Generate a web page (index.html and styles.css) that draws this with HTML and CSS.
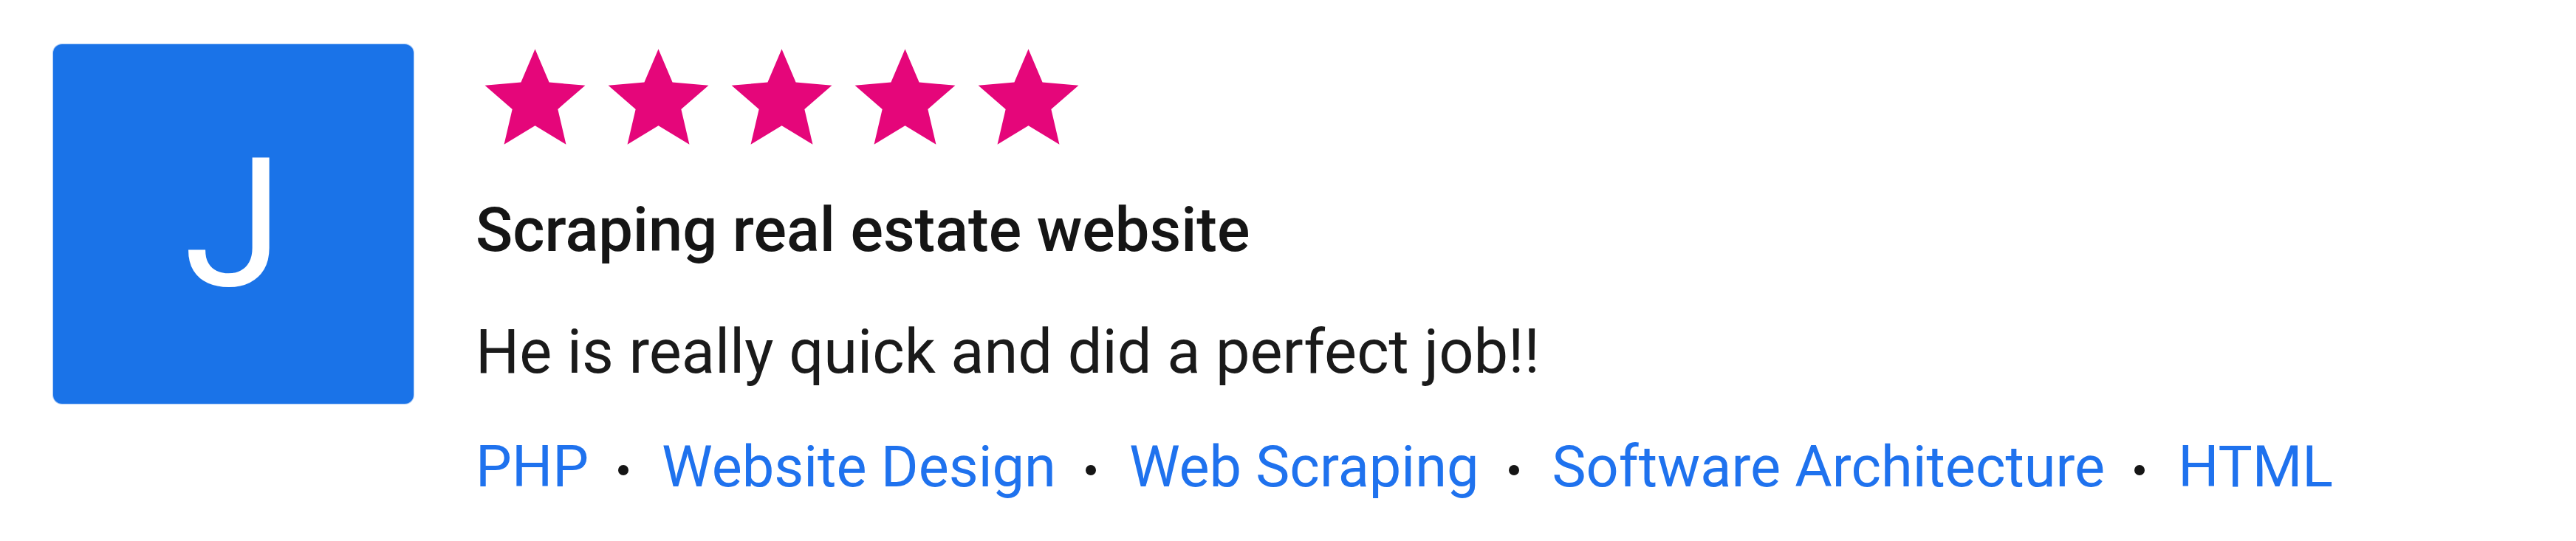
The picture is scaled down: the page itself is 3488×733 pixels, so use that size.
FILE: index.html
```html
<!DOCTYPE html>
<html lang="en">
<head>
    <meta charset="UTF-8">
    <meta name="viewport" content="width=device-width, initial-scale=1.0">
    <title>Review</title>
    <link rel="stylesheet" href="styles.css">
</head>
<body>
    <div class="review">
        <div class="avatar">J</div>
        <div class="review-body">
            <div class="stars">
                <svg class="star" viewBox="0 0 24 24"><path d="M12 17.27L18.18 21l-1.64-7.03L22 9.24l-7.19-.61L12 2 9.19 8.63 2 9.24l5.46 4.73L5.82 21z"/></svg>
                <svg class="star" viewBox="0 0 24 24"><path d="M12 17.27L18.18 21l-1.64-7.03L22 9.24l-7.19-.61L12 2 9.19 8.63 2 9.24l5.46 4.73L5.82 21z"/></svg>
                <svg class="star" viewBox="0 0 24 24"><path d="M12 17.27L18.18 21l-1.64-7.03L22 9.24l-7.19-.61L12 2 9.19 8.63 2 9.24l5.46 4.73L5.82 21z"/></svg>
                <svg class="star" viewBox="0 0 24 24"><path d="M12 17.27L18.18 21l-1.64-7.03L22 9.24l-7.19-.61L12 2 9.19 8.63 2 9.24l5.46 4.73L5.82 21z"/></svg>
                <svg class="star" viewBox="0 0 24 24"><path d="M12 17.27L18.18 21l-1.64-7.03L22 9.24l-7.19-.61L12 2 9.19 8.63 2 9.24l5.46 4.73L5.82 21z"/></svg>
            </div>
            <h2 class="title">Scraping real estate website</h2>
            <p class="comment">He is really quick and did a perfect job!!</p>
            <div class="skills">
                <a href="#">PHP</a>
                <span class="dot"></span>
                <a href="#">Website Design</a>
                <span class="dot"></span>
                <a href="#">Web Scraping</a>
                <span class="dot"></span>
                <a href="#">Software Architecture</a>
                <span class="dot"></span>
                <a href="#">HTML</a>
            </div>
        </div>
    </div>
</body>
</html>
```

FILE: styles.css
```css
body {
    margin: 0;
    background: #ffffff;
    font-family: 'Roboto', 'Liberation Sans', sans-serif;
}
.review {
    display: flex;
    align-items: flex-start;
    gap: 84px;
    padding: 53px 72px 0;
}
.avatar {
    flex: none;
    width: 488px;
    height: 487px;
    margin-top: 7px;
    background-color: #1a73e8;
    border-radius: 12px;
    box-shadow: 0 0 0 1px rgba(26, 115, 232, 0.35);
    color: #ffffff;
    font-size: 244px;
    display: flex;
    justify-content: center;
    align-items: center;
}
.review-body {
    display: flex;
    flex-direction: column;
}
.stars {
    display: flex;
    gap: 4px;
    margin-left: -1px;
}
.star {
    width: 163px;
    height: 163px;
    fill: #e5067a;
}
.title {
    margin: 46px 0 0;
    font-size: 83px;
    font-weight: 500;
    line-height: 100px;
    color: #151515;
}
.comment {
    margin: 65px 0 0;
    font-size: 83px;
    line-height: 100px;
    color: #1a1a1a;
}
.skills {
    display: flex;
    align-items: center;
    margin-top: 56px;
    font-size: 77.5px;
    line-height: 100px;
}
.skills a {
    color: #1f72ee;
    text-decoration: none;
}
.dot {
    width: 14px;
    height: 14px;
    margin: 8px 45px 0 40px;
    border-radius: 50%;
    background: #151515;
}
```
